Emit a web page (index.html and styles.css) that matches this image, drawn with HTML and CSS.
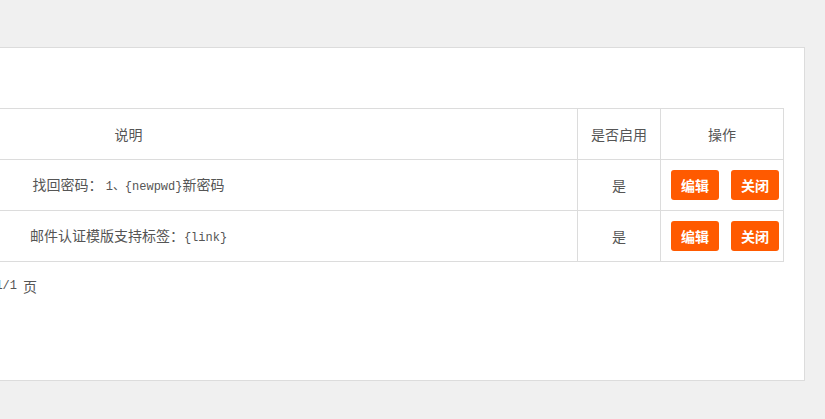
FILE: index.html
```html
<!DOCTYPE html>
<html lang="zh-CN">
<head>
<meta charset="utf-8">
<title>邮件模版</title>
<link rel="stylesheet" href="styles.css">
</head>
<body>
<div class="page">
  <div class="panel">
    <table class="grid">
      <colgroup>
        <col class="c-id">
        <col class="c-desc">
        <col class="c-on">
        <col class="c-act">
      </colgroup>
      <thead>
        <tr>
          <th>名称</th>
          <th>说明</th>
          <th>是否启用</th>
          <th>操作</th>
        </tr>
      </thead>
      <tbody>
        <tr>
          <td>找回密码</td>
          <td>找回密码： <span class="mono">1、{newpwd}</span>新密码</td>
          <td>是</td>
          <td class="ops"><div class="btns"><button class="btn">编辑</button><button class="btn">关闭</button></div></td>
        </tr>
        <tr>
          <td>邮件认证</td>
          <td>邮件认证模版支持标签：<span class="mono">{link}</span></td>
          <td>是</td>
          <td class="ops"><div class="btns"><button class="btn">编辑</button><button class="btn">关闭</button></div></td>
        </tr>
      </tbody>
    </table>
    <div class="pager"><span>共 2 条记录</span><span class="mono">1/1</span><span>页</span></div>
  </div>
</div>
</body>
</html>
```

FILE: styles.css
```css
html, body {
  margin: 0;
  padding: 0;
}
body {
  background: #f0f0f0;
  overflow: hidden;
  font-family: "Noto Sans CJK SC", "Noto Sans", sans-serif;
  font-size: 14px;
  color: #555;
}
.page {
  padding-top: 47px;
}
.panel {
  margin-left: -420px;
  width: 1225px;
  height: 334px;
  box-sizing: border-box;
  background: #fff;
  border: 1px solid #dcdcdc;
  padding: 60px 21px 0 20px;
}
.grid {
  width: 1182px;
  table-layout: fixed;
  border-collapse: collapse;
}
.c-id { width: 78px; }
.c-desc { width: 898px; }
.c-on { width: 83px; }
.c-act { width: 123px; }
.grid th, .grid td {
  border: 1px solid #dcdcdc;
  height: 51px;
  padding: 0;
  text-align: center;
  font-weight: normal;
  color: #555;
  line-height: 20px;
  box-sizing: border-box;
}
.mono {
  font-family: "Liberation Mono", "DejaVu Sans Mono", monospace;
  font-size: 12px;
}
.grid td.ops {
  text-align: left;
}
.btns {
  display: flex;
  gap: 12px;
  padding-left: 10px;
}
.btn {
  width: 48px;
  height: 30px;
  border: 0;
  border-radius: 3px;
  background: #ff5a00;
  color: #fff;
  font-family: "Noto Sans CJK SC", sans-serif;
  font-size: 14px;
  font-weight: bold;
  padding: 0;
}
.pager {
  width: 436px;
  margin-top: 14px;
  display: flex;
  justify-content: flex-end;
  gap: 6px;
  line-height: 20px;
  color: #555;
}
```
